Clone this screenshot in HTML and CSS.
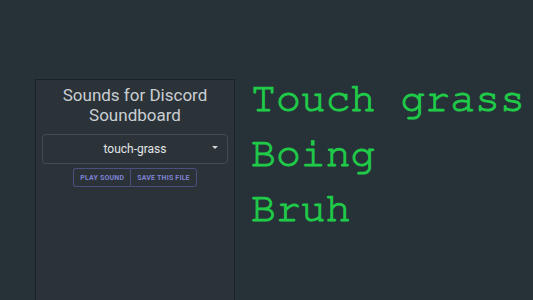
FILE: index.html
```html
<!DOCTYPE html>
<html lang="en">
<head>
  <meta charset="UTF-8" />
  <meta name="viewport" content="width=device-width, initial-scale=1.0"/>
  <title>Sounds for Discord Soundboard</title>
  <link rel="stylesheet" href="styles.css">
</head>
<body>

  <div class="page">
    <div class="board">
      <h1>Sounds for Discord Soundboard</h1>

      <div class="picker">
        <span class="picker-value">touch-grass</span>
        <span class="picker-arrow"></span>
      </div>

      <div class="actions">
        <button type="button">Play sound</button>
        <button type="button">Save this file</button>
      </div>
    </div>

    <div class="sounds">
      <p>Touch grass</p>
      <p>Boing</p>
      <p>Bruh</p>
    </div>
  </div>

</body>
</html>
```

FILE: styles.css
```css
html, body {
  height: 100%;
}

body {
  margin: 0;
  background-color: #263238;
  font-family: Roboto, "Noto Sans", sans-serif;
  overflow: hidden;
}

.page {
  display: flex;
  height: 100%;
  padding: 79px 0 0 35px;
  box-sizing: border-box;
}

.board {
  width: 200px;
  background-color: #2b3339;
  border: 1px solid #1b2125;
  border-bottom: none;
  box-sizing: border-box;
  padding: 5px 6px 0 6px;
}

.board h1 {
  margin: 0 0 9px;
  font-size: 17px;
  font-weight: 400;
  line-height: 20px;
  text-align: center;
  color: #c9ced2;
}

.picker {
  position: relative;
  height: 28px;
  border: 1px solid #434c52;
  border-radius: 4px;
  display: flex;
  align-items: center;
  justify-content: center;
}

.picker-value {
  font-size: 12px;
  color: #e2e5e7;
}

.picker-arrow {
  position: absolute;
  right: 9px;
  top: 11px;
  width: 0;
  height: 0;
  border-left: 3px solid transparent;
  border-right: 3px solid transparent;
  border-top: 3px solid #cfd3d6;
}

.actions {
  display: flex;
  justify-content: center;
  margin-top: 4px;
}

.actions button {
  height: 19px;
  padding: 0 6px;
  background: transparent;
  border: 1px solid #4b4f7e;
  color: #7e82d4;
  font-family: Roboto, "Noto Sans", sans-serif;
  font-size: 7px;
  font-weight: 700;
  text-transform: uppercase;
  letter-spacing: 0.2px;
  cursor: pointer;
}

.actions button:first-child {
  border-radius: 3px 0 0 3px;
  border-right: none;
}

.actions button:last-child {
  border-radius: 0 3px 3px 0;
}

.sounds {
  margin-top: -8px;
  padding-left: 16px;
}

.sounds p {
  margin: 0;
  font-family: "Nimbus Mono PS", "Nimbus Mono L", FreeMono, "Courier 10 Pitch", Courier, "Liberation Mono", monospace;
  font-size: 41.5px;
  line-height: 55px;
  color: #1fcb48;
  -webkit-text-stroke: 1px #1fcb48;
  white-space: nowrap;
}
```
